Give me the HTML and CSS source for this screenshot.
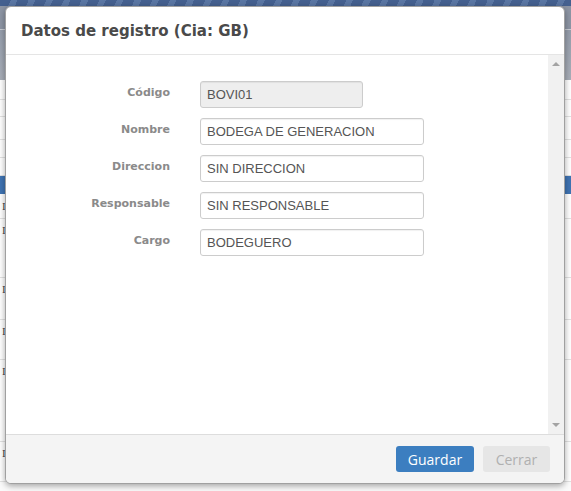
FILE: index.html
```html
<!DOCTYPE html>
<html lang="es">
<head>
<meta charset="utf-8">
<title>Datos de registro</title>
<link rel="stylesheet" href="styles.css">
</head>
<body>
<div class="page">
  <div class="topbar"></div>
  <div class="toolbar"></div>
  <div class="thead"></div>
  <div class="table">
    <div class="row h20"></div>
    <div class="row h17"></div>
    <div class="row h23"></div>
    <div class="row h18"></div>
    <div class="row h18"></div>
    <div class="row sel"></div>
    <div class="row h25"><span class="cell">I</span></div>
    <div class="row h59"><span class="cell top">I</span></div>
    <div class="row h42"><span class="cell top">I</span></div>
    <div class="row h40"><span class="cell top">I</span></div>
    <div class="row h82"><span class="cell top">I</span></div>
    <div class="row h40"><span class="cell top">I</span></div>
  </div>
</div>

<div class="modal">
  <div class="modal-header">
    <h4 class="modal-title">Datos de registro (Cia: GB)</h4>
  </div>
  <div class="modal-body">
    <div class="content">
      <form class="form">
        <label class="lbl">Código</label>
        <div class="field"><input class="inp short" type="text" value="BOVI01" readonly></div>
        <label class="lbl">Nombre</label>
        <div class="field"><input class="inp" type="text" value="BODEGA DE GENERACION"></div>
        <label class="lbl">Direccion</label>
        <div class="field"><input class="inp" type="text" value="SIN DIRECCION"></div>
        <label class="lbl">Responsable</label>
        <div class="field"><input class="inp" type="text" value="SIN RESPONSABLE"></div>
        <label class="lbl">Cargo</label>
        <div class="field"><input class="inp" type="text" value="BODEGUERO"></div>
      </form>
    </div>
    <div class="scrollbar">
      <span class="arrow up"></span>
      <span class="arrow down"></span>
    </div>
  </div>
  <div class="modal-footer">
    <button class="btn primary" type="button">Guardar</button>
    <button class="btn disabled" type="button">Cerrar</button>
  </div>
</div>
</body>
</html>
```
FILE: styles.css
```css
html, body {
  margin: 0;
  padding: 0;
}
body {
  width: 571px;
  height: 491px;
  overflow: hidden;
  position: relative;
  background: #fafafa;
  font-family: "Liberation Sans", Arial, sans-serif;
}
.page {
  display: flex;
  flex-direction: column;
}
.topbar {
  height: 6px;
  background: repeating-linear-gradient(115deg, #44608f 0 10px, #5a76a3 10px 16px);
}
.toolbar {
  height: 23px;
  background: #8d95a4;
  border-bottom: 1px solid #c9cdd4;
}
.thead {
  height: 50px;
  background: linear-gradient(#969eac, #a8aeb8);
}
.table {
  display: flex;
  flex-direction: column;
  background: #fff;
}
.row {
  box-sizing: border-box;
  border-bottom: 1px solid #e2e2e2;
  font-family: "Liberation Serif", serif;
  font-size: 11px;
  color: #444;
  display: flex;
  align-items: center;
}
.h17 { height: 17px; }
.h18 { height: 18px; }
.h20 { height: 20px; }
.h23 { height: 23px; }
.h25 { height: 25px; }
.h40 { height: 40px; }
.h42 { height: 42px; }
.h59 { height: 59px; }
.h82 { height: 82px; }
.row.sel { background: #3f74b3; height: 18px; border-bottom: 0; }
.cell { padding-left: 2px; }
.cell.top { align-self: flex-start; padding-top: 5px; }

.modal {
  position: absolute;
  left: 5px;
  top: 6px;
  width: 558px;
  height: 476px;
  background: #fff;
  border: 1px solid #a0a0a0;
  border-radius: 6px;
  box-shadow: 0 2px 6px rgba(0,0,0,0.35);
  display: flex;
  flex-direction: column;
  overflow: hidden;
}
.modal-header {
  height: 47px;
  border-bottom: 1px solid #e5e5e5;
  display: flex;
  align-items: center;
  padding-left: 15px;
}
.modal-title {
  margin: 0;
  font-family: "DejaVu Sans", Verdana, sans-serif;
  font-weight: 700;
  font-size: 15px;
  color: #4a4a4a;
}
.modal-body {
  flex: 1;
  display: flex;
  min-height: 0;
}
.content {
  flex: 1;
}
.form {
  margin: 26px 0 0 0;
  display: grid;
  grid-template-columns: 164px 224px;
  column-gap: 30px;
  row-gap: 10px;
}
.lbl {
  text-align: right;
  font-family: "DejaVu Sans", Verdana, sans-serif;
  font-weight: 700;
  font-size: 11px;
  color: #8a8a8a;
  padding-top: 5px;
}
.inp {
  box-sizing: border-box;
  width: 224px;
  height: 27px;
  margin: 0;
  border: 1px solid #cccccc;
  border-radius: 3px;
  padding: 0 6px;
  font-family: "Liberation Sans", Arial, sans-serif;
  font-size: 13px;
  color: #555;
  background: #fff;
  box-shadow: inset 0 1px 1px rgba(0,0,0,0.06);
}
.inp.short {
  width: 163px;
  background: #eeeeee;
}
.scrollbar {
  width: 16px;
  background: #f1f1f1;
  position: relative;
}
.arrow {
  position: absolute;
  left: 4px;
  width: 0;
  height: 0;
  border-left: 4px solid transparent;
  border-right: 4px solid transparent;
}
.arrow.up {
  top: 7px;
  border-bottom: 4px solid #a3a3a3;
}
.arrow.down {
  bottom: 7px;
  border-top: 4px solid #a3a3a3;
}
.modal-footer {
  height: 48px;
  background: #f4f4f4;
  border-top: 1px solid #dddddd;
  display: flex;
  align-items: center;
  justify-content: flex-end;
  gap: 9px;
  padding-right: 14px;
}
.btn {
  height: 26px;
  border: 0;
  border-radius: 3px;
  font-family: "Open Sans", sans-serif;
  font-size: 14px;
  padding: 0;
}
.btn.primary {
  width: 78px;
  background: #3c7ec0;
  color: #fff;
}
.btn.disabled {
  width: 67px;
  background: #e6e6e6;
  color: #b0b0b0;
}
```
